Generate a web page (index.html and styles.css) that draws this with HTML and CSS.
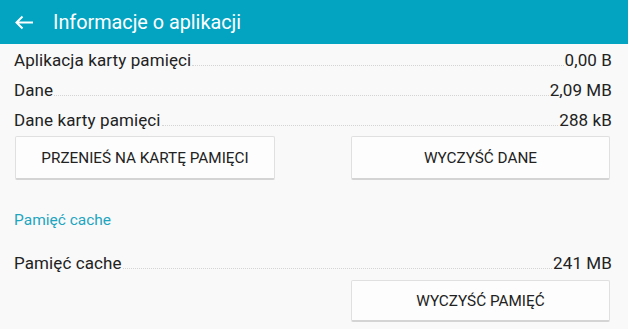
FILE: index.html
```html
<!DOCTYPE html>
<html lang="pl">
<head>
  <meta charset="UTF-8">
  <meta name="viewport" content="width=device-width, initial-scale=1.0">
  <title>Informacje o aplikacji</title>
  <link rel="stylesheet" href="styles.css">
</head>
<body>
<div class="app-bar">
  <svg class="back-icon" width="19" height="15" viewBox="0 0 19 15">
    <path d="M1.5 7.5H18M7.5 1.5L1.5 7.5L7.5 13.5" fill="none" stroke="#ffffff" stroke-width="2"/>
  </svg>
  <span class="app-title">Informacje o aplikacji</span>
</div>

<div class="content">
  <div class="info-row first-row">
    <span class="label">Aplikacja karty pamięci</span>
    <span class="dots"></span>
    <span class="value">0,00 B</span>
  </div>
  <div class="info-row">
    <span class="label">Dane</span>
    <span class="dots"></span>
    <span class="value">2,09 MB</span>
  </div>
  <div class="info-row">
    <span class="label">Dane karty pamięci</span>
    <span class="dots"></span>
    <span class="value">288 kB</span>
  </div>

  <div class="button-row">
    <button class="flat-btn">PRZENIEŚ NA KARTĘ PAMIĘCI</button>
    <button class="flat-btn">WYCZYŚĆ DANE</button>
  </div>

  <div class="section-title">Pamięć cache</div>

  <div class="info-row cache-row">
    <span class="label">Pamięć cache</span>
    <span class="dots"></span>
    <span class="value">241 MB</span>
  </div>

  <div class="button-row cache-buttons">
    <span class="spacer"></span>
    <button class="flat-btn">WYCZYŚĆ PAMIĘĆ</button>
  </div>
</div>
</body>
</html>
```

FILE: styles.css
```css
body {
  margin: 0;
  padding: 0;
  font-family: Roboto, "Noto Sans", sans-serif;
  background-color: #f9f9f9;
  color: #222222;
  width: 628px;
  height: 329px;
  overflow: hidden;
}

.app-bar {
  height: 44px;
  background-color: #03a4c2;
  display: flex;
  align-items: center;
  padding-left: 15px;
  box-sizing: border-box;
}

.back-icon {
  margin-right: 19px;
  margin-top: 1px;
}

.app-title {
  color: #ffffff;
  font-size: 19.8px;
}

.content {
  padding: 0 16px 0 14px;
}

.info-row {
  display: flex;
  align-items: flex-end;
  height: 30px;
  font-size: 17px;
}

.first-row {
  height: 26px;
}

.label,
.value {
  line-height: 20px;
  letter-spacing: 0.1px;
}

.dots {
  flex: 1;
  border-bottom: 1px dotted #d4d4d4;
  margin: 0 1px 4px 1px;
}

.button-row {
  display: flex;
  justify-content: space-between;
  margin-top: 6px;
}

.spacer {
  width: 260px;
}

.flat-btn {
  width: 260px;
  height: 44px;
  background-color: #fdfdfd;
  border: 1px solid #e0e0e0;
  border-bottom: 2px solid #d4d4d4;
  border-radius: 2px;
  font-family: Roboto, "Noto Sans", sans-serif;
  font-size: 15.3px;
  color: #222222;
  padding: 0;
  margin-left: 1px;
}

.flat-btn:last-child {
  margin-right: 2px;
  width: 259px;
}

.section-title {
  color: #1ea5bf;
  font-size: 15.5px;
  margin-top: 30px;
  line-height: 20px;
}

.cache-row {
  height: 43px;
}

.cache-buttons {
  margin-top: 7px;
}

.cache-buttons .flat-btn {
  height: 42px;
}
```
